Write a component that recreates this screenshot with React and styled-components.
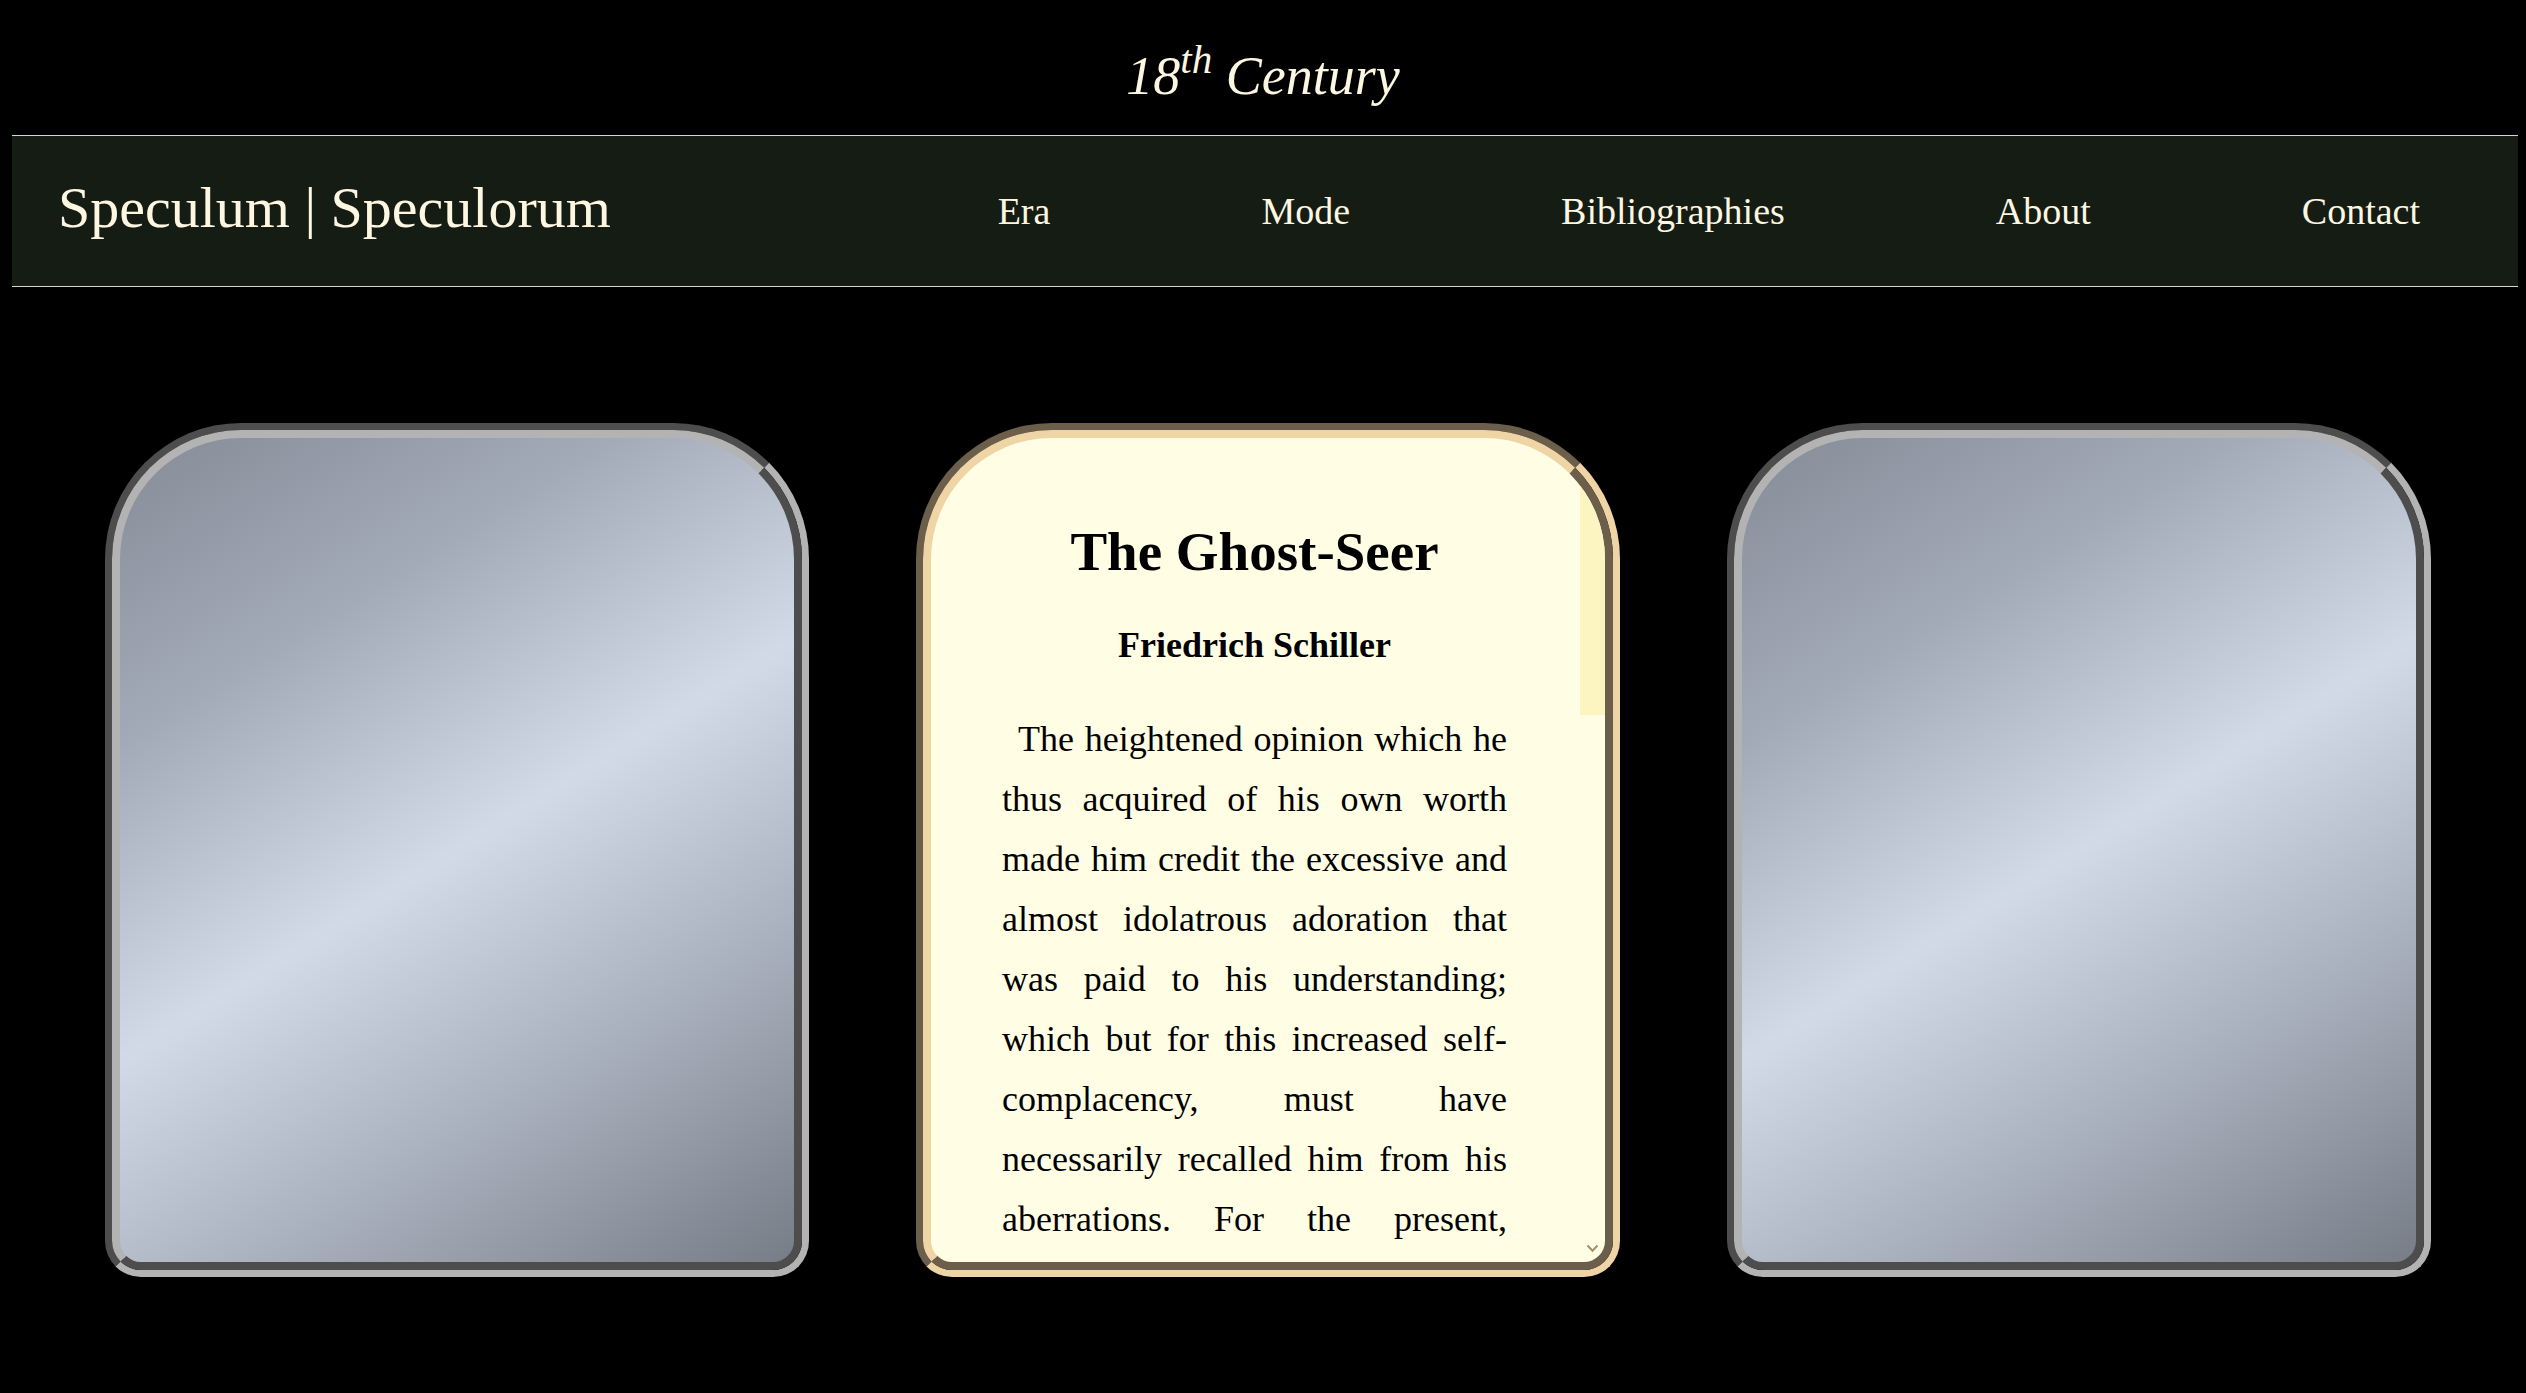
import React from "react";
import styled, { createGlobalStyle, css } from "styled-components";

const GlobalStyle = createGlobalStyle`
  html, body {
    background: #000;
  }
  body {
    margin: 8px;
    font-family: "Liberation Serif", "Times New Roman", serif;
  }
  * {
    box-sizing: border-box;
  }
`;

const tones = {
  steel: { dark: "#4d4d4d", light: "#b3b3b3" },
  parchment: { dark: "#6b5e4a", light: "#efd4a6" },
};

const EraHeading = styled.h1`
  margin: 0;
  height: 127px;
  padding-top: 8px;
  display: flex;
  align-items: center;
  justify-content: center;
  font-size: 54px;
  font-weight: 400;
  font-style: italic;
  color: #fdf6e1;
  line-height: 60px;

  sup {
    font-size: 0.76em;
    line-height: 0;
    vertical-align: baseline;
    position: relative;
    top: -0.4em;
  }
`;

const NavBar = styled.nav`
  height: 152px;
  margin: 0 -2px 0 4px;
  border-top: 1px solid #d9d5c4;
  border-bottom: 1px solid #d9d5c4;
  background: #151c14;
  display: flex;
  align-items: center;
  justify-content: space-between;
  padding: 0 100px 0 46px;
`;

const Brand = styled.div`
  font-size: 58px;
  color: #fdf6e1;
  padding-bottom: 8px;
  white-space: nowrap;
`;

const NavList = styled.ul`
  list-style: none;
  margin: 0;
  padding: 0;
  display: flex;
  gap: 211px;
`;

const NavLink = styled.a`
  font-size: 38px;
  color: #fdf6e1;
  text-decoration: none;
  white-space: nowrap;
`;

const CardRow = styled.main`
  display: flex;
  gap: 107px;
  padding: 136px 0 0 97px;
`;

const Frame = styled.section`
  width: 704px;
  height: 854px;
  flex: none;
  border: 7px solid;
  border-color: ${(p) => `${tones[p.$tone].dark} ${tones[p.$tone].light} ${tones[p.$tone].light} ${tones[p.$tone].dark}`};
  border-radius: 136px 136px 36px 36px;
`;

const Panel = styled.div`
  height: 100%;
  border: 8px solid;
  border-color: ${(p) => `${tones[p.$tone].light} ${tones[p.$tone].dark} ${tones[p.$tone].dark} ${tones[p.$tone].light}`};
  border-radius: 129px 129px 29px 29px;
  overflow: hidden;
  ${(p) =>
    p.$tone === "steel"
      ? css`
          background: linear-gradient(
            148deg,
            #858c98 0%,
            #a4abb8 25%,
            #d3dae7 50%,
            #a8afbc 74%,
            #777d87 100%
          );
        `
      : css`
          background: #fffee5;
          display: flex;
        `}
`;

const Reading = styled.article`
  flex: 1;
  min-width: 0;
  height: 100%;
  overflow-y: auto;
  scrollbar-width: none;
  padding: 84px 73px 60px 71px;
  color: #000;
`;

const ScrollRail = styled.div`
  width: 25px;
  flex: none;
  height: 100%;
  display: flex;
  flex-direction: column;
  justify-content: space-between;
  align-items: center;
`;

const ScrollThumb = styled.div`
  width: 100%;
  height: 277px;
  background: #fcf4c1;
`;

const ScrollArrow = styled.svg`
  width: 13px;
  height: 9px;
  margin-bottom: 9px;
`;

const StoryTitle = styled.h2`
  margin: 0;
  font-size: 55px;
  line-height: 60px;
  font-weight: 700;
  text-align: center;
`;

const StoryAuthor = styled.h3`
  margin: 33px 0 0;
  font-size: 36px;
  line-height: 60px;
  font-weight: 700;
  text-align: center;
`;

const Paragraph = styled.p`
  margin: ${(p) => (p.$first ? "34px" : "0")} 0 0;
  font-size: 36px;
  line-height: 60px;
  text-align: justify;
  text-indent: 16px;
`;

const paragraphs = [
  "The heightened opinion which he thus acquired of his own worth made him credit the excessive and almost idolatrous adoration that was paid to his understanding; which but for this increased self-complacency, must have necessarily recalled him from his aberrations. For the present, however, this general homage did but confirm what his own vanity had already whispered to him, and he accepted as a just tribute what was at best the flattery of dependents.",
  "Thus, by degrees, he was drawn into a circle of men whose society was as dangerous to his principles as it was agreeable to his inclinations; and the Prince, who had hitherto lived only for himself and his own reflections, now began to find pleasure in the applause of others.",
  "It was at this time that the Armenian, whom we had almost forgotten, once more crossed our path, and under circumstances so singular that even the Prince could no longer regard them with indifference.",
];

export default function App() {
  return (
    <>
      <GlobalStyle />
      <EraHeading>
        18<sup>th</sup>&nbsp;Century
      </EraHeading>
      <NavBar>
        <Brand>Speculum | Speculorum</Brand>
        <NavList>
          {["Era", "Mode", "Bibliographies", "About", "Contact"].map((item) => (
            <li key={item}>
              <NavLink href="#">{item}</NavLink>
            </li>
          ))}
        </NavList>
      </NavBar>
      <CardRow>
        <Frame $tone="steel">
          <Panel $tone="steel" />
        </Frame>
        <Frame $tone="parchment">
          <Panel $tone="parchment">
            <Reading>
              <StoryTitle>The Ghost-Seer</StoryTitle>
              <StoryAuthor>Friedrich Schiller</StoryAuthor>
              {paragraphs.map((text, i) => (
                <Paragraph key={i} $first={i === 0}>
                  {text}
                </Paragraph>
              ))}
            </Reading>
            <ScrollRail aria-hidden="true">
              <ScrollThumb />
              <ScrollArrow viewBox="0 0 13 9">
                <path d="M1.5 1.5 L6.5 6.8 L11.5 1.5" fill="none" stroke="#a38f6d" strokeWidth="2" />
              </ScrollArrow>
            </ScrollRail>
          </Panel>
        </Frame>
        <Frame $tone="steel">
          <Panel $tone="steel" />
        </Frame>
      </CardRow>
    </>
  );
}
